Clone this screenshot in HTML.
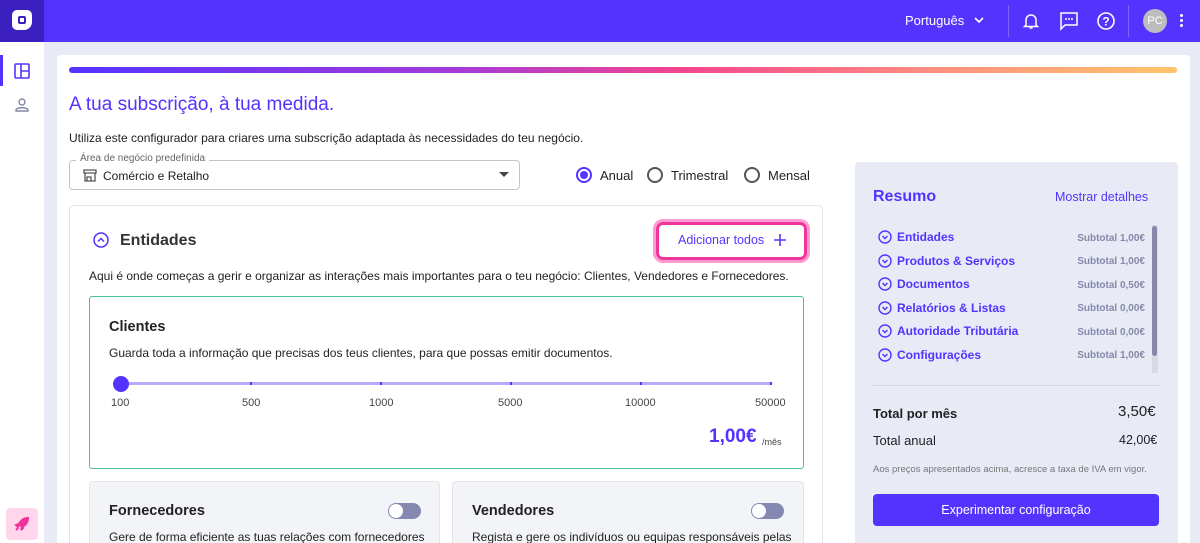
<!DOCTYPE html>
<html style="width:1200px;height:543px;overflow:hidden"><head><meta charset="utf-8"><style>
*{box-sizing:border-box;margin:0;padding:0}
body{width:1200px;height:543px;overflow:hidden;background:#e8eaf6;font-family:"Liberation Sans",sans-serif;color:#222;position:relative;font-size:13px}
.abs{position:absolute}
.top{left:0;top:0;width:1200px;height:42px;background:#5433ff}
.logo{left:0;top:0;width:44px;height:42px;background:#3c1fbf}
.side{left:0;top:42px;width:44px;height:501px;background:#fff}
.card{left:57px;top:55px;width:1133px;height:488px;background:#fff;border-radius:4px 4px 0 0}
.grad{left:69px;top:67px;width:1108px;height:6px;border-radius:3px;background:linear-gradient(90deg,#5433ff,#a53ad8 35%,#f5458f 55%,#ff8f80 78%,#ffc46a)}
.panel{left:69px;top:205px;width:754px;height:360px;border:1px solid #e3e3e8;border-radius:4px}
.sum{left:855px;top:162px;width:323px;height:381px;background:#e8eaf6;border-radius:4px 4px 0 0}
.radio{width:16px;height:16px;border:2px solid #555;border-radius:50%}
.chev{display:inline-block;vertical-align:-3px;margin-right:5px}
.row{left:878px;font-weight:bold;color:#5433ff;font-size:12px}
.sub{right:55px;font-weight:bold;color:#8588a8;font-size:10px}
.tick{top:382px;width:2px;height:3px;background:#5433ff}
.lbl{top:397px;font-size:11px;color:#444}
</style></head><body>
<div class="abs top"></div>
<div class="abs logo"><div class="abs" style="left:12px;top:10px;width:20px;height:20px;border-radius:5px 5px 8px 5px;background:#fff"></div><div class="abs" style="left:18px;top:16px;width:8px;height:8px;border:2px solid #3c1fbf;border-radius:2px;background:#fff"></div></div>
<div class="abs" style="left:905px;top:13px;color:#fff;font-size:13px">Português</div>
<svg class="abs" style="left:973px;top:15px" width="12" height="10"><path d="M2 3l4 4 4-4" stroke="#fff" stroke-width="1.6" fill="none"/></svg>
<div class="abs" style="left:1008px;top:5px;width:1px;height:32px;background:#7a66ff"></div>
<svg class="abs" style="left:1022px;top:11px" width="18" height="20"><path d="M4 14V9a5 5 0 0 1 10 0v5l1.5 1.5h-13z M7.5 17h3" stroke="#fff" stroke-width="1.5" fill="none"/></svg>
<svg class="abs" style="left:1059px;top:11px" width="20" height="20"><path d="M2 2h16v12H6l-4 4z" stroke="#fff" stroke-width="1.5" fill="none"/><circle cx="7" cy="8" r="1" fill="#fff"/><circle cx="10" cy="8" r="1" fill="#fff"/><circle cx="13" cy="8" r="1" fill="#fff"/></svg>
<svg class="abs" style="left:1096px;top:11px" width="20" height="20"><circle cx="10" cy="10" r="8" stroke="#fff" stroke-width="1.6" fill="none"/><text x="10" y="14.5" font-size="12" font-weight="bold" fill="#fff" text-anchor="middle" font-family="Liberation Sans">?</text></svg>
<div class="abs" style="left:1128px;top:5px;width:1px;height:32px;background:#7a66ff"></div>
<div class="abs" style="left:1143px;top:9px;width:24px;height:24px;border-radius:50%;background:#bdbdbd;color:#fff;font-size:11px;text-align:center;line-height:24px">PC</div>
<div class="abs" style="left:1180px;top:14px;width:3px;height:3px;background:#fff;border-radius:50%;box-shadow:0 5px 0 #fff,0 10px 0 #fff"></div>
<div class="abs side"></div>
<div class="abs" style="left:0;top:55px;width:3px;height:31px;background:#5433ff"></div>
<svg class="abs" style="left:14px;top:63px" width="16" height="16"><rect x="1" y="1" width="14" height="14" rx="1" stroke="#5433ff" stroke-width="1.6" fill="none"/><path d="M7 1v14M7 8h8" stroke="#5433ff" stroke-width="1.6"/></svg>
<svg class="abs" style="left:14px;top:97px" width="16" height="16"><circle cx="8" cy="5" r="3" stroke="#8588a8" stroke-width="1.4" fill="none"/><path d="M2 14v-1c0-3 12-3 12 0v1z" stroke="#8588a8" stroke-width="1.4" fill="none"/></svg>
<div class="abs" style="left:6px;top:508px;width:32px;height:32px;border-radius:4px;background:#ffd6ec"></div>
<svg class="abs" style="left:13px;top:515px" width="18" height="18"><path d="M15 3c-4 0-7 2-9 6l3 3c4-2 6-5 6-9zM6 9l-3 1 2 2zM9 12l-1 3 2-2zM5 13l-2 2" stroke="#f0349a" stroke-width="2" fill="#f0349a"/></svg>
<div class="abs card"></div>
<div class="abs grad"></div>
<div class="abs" style="left:69px;top:94px;font-size:19px;color:#5433ff">A tua subscrição, à tua medida.</div>
<div class="abs" style="left:69px;top:131px;font-size:12px">Utiliza este configurador para criares uma subscrição adaptada às necessidades do teu negócio.</div>
<div class="abs" style="left:69px;top:160px;width:451px;height:30px;border:1px solid #c4c4c4;border-radius:4px"></div>
<div class="abs" style="left:76px;top:153px;background:#fff;padding:0 4px;font-size:10px;color:#666">Área de negócio predefinida</div>
<svg class="abs" style="left:83px;top:169px" width="14" height="13"><path d="M1 1h12v3H1zM2 4v8h10V4M4 12V8h4v4" stroke="#555" stroke-width="1.3" fill="none"/></svg>
<div class="abs" style="left:103px;top:169px;font-size:12px">Comércio e Retalho</div>
<svg class="abs" style="left:499px;top:172px" width="10" height="6"><path d="M0 0h10L5 5z" fill="#444"/></svg>
<div class="abs radio" style="left:576px;top:167px;border-color:#5433ff"><div style="margin:2px;width:8px;height:8px;border-radius:50%;background:#5433ff"></div></div>
<div class="abs" style="left:600px;top:168px;font-size:13px">Anual</div>
<div class="abs radio" style="left:647px;top:167px"></div>
<div class="abs" style="left:671px;top:168px;font-size:13px">Trimestral</div>
<div class="abs radio" style="left:744px;top:167px"></div>
<div class="abs" style="left:768px;top:168px;font-size:13px">Mensal</div>
<div class="abs panel"></div>
<svg class="abs" style="left:93px;top:232px" width="16" height="16"><circle cx="8" cy="8" r="7" stroke="#5433ff" stroke-width="1.5" fill="none"/><path d="M5 9.5l3-3 3 3" stroke="#5433ff" stroke-width="1.5" fill="none"/></svg>
<div class="abs" style="left:120px;top:232px;font-size:16px;font-weight:bold;color:#333">Entidades</div>
<div class="abs" style="left:656px;top:222px;width:151px;height:38px;border:3px solid #f0349a;border-radius:7px;box-shadow:0 0 0 3px #ff9bd0"></div>
<div class="abs" style="left:678px;top:233px;font-size:12.5px;color:#5433ff">Adicionar todos</div>
<svg class="abs" style="left:774px;top:234px" width="12" height="12"><path d="M6 0v12M0 6h12" stroke="#5433ff" stroke-width="1.6"/></svg>
<div class="abs" style="left:89px;top:269px;font-size:12px">Aqui é onde começas a gerir e organizar as interações mais importantes para o teu negócio: Clientes, Vendedores e Fornecedores.</div>
<div class="abs" style="left:89px;top:296px;width:715px;height:173px;border:1px solid #4cbf96;border-radius:3px"></div>
<div class="abs" style="left:109px;top:319px;font-size:14.5px;font-weight:bold">Clientes</div>
<div class="abs" style="left:109px;top:346px;font-size:12px">Guarda toda a informação que precisas dos teus clientes, para que possas emitir documentos.</div>
<div class="abs" style="left:118px;top:382px;width:654px;height:3px;background:#b8aaff"></div>
<div class="abs" style="left:113px;top:376px;width:16px;height:16px;border-radius:50%;background:#5433ff"></div>
<div class="abs tick" style="left:250px"></div><div class="abs tick" style="left:380px"></div><div class="abs tick" style="left:510px"></div><div class="abs tick" style="left:640px"></div><div class="abs tick" style="left:770px"></div>
<div class="abs lbl" style="left:111px">100</div><div class="abs lbl" style="left:242px">500</div><div class="abs lbl" style="left:369px">1000</div><div class="abs lbl" style="left:498px">5000</div><div class="abs lbl" style="left:625px">10000</div><div class="abs lbl" style="left:755px">50000</div>
<div class="abs" style="left:709px;top:426px;font-size:19px;font-weight:bold;color:#5433ff">1,00€</div>
<div class="abs" style="left:762px;top:437px;font-size:9px;color:#444">/mês</div>
<div class="abs" style="left:89px;top:481px;width:351px;height:80px;background:#f3f4f8;border:1px solid #e3e3e8;border-radius:4px"></div>
<div class="abs" style="left:452px;top:481px;width:352px;height:80px;background:#f3f4f8;border:1px solid #e3e3e8;border-radius:4px"></div>
<div class="abs" style="left:109px;top:503px;font-size:14.5px;font-weight:bold">Fornecedores</div>
<div class="abs" style="left:472px;top:503px;font-size:14.5px;font-weight:bold">Vendedores</div>
<div class="abs" style="left:388px;top:503px;width:33px;height:16px;border-radius:8px;background:#8588b0"><div style="margin:1px;width:14px;height:14px;border-radius:50%;background:#fff"></div></div>
<div class="abs" style="left:751px;top:503px;width:33px;height:16px;border-radius:8px;background:#8588b0"><div style="margin:1px;width:14px;height:14px;border-radius:50%;background:#fff"></div></div>
<div class="abs" style="left:109px;top:530px;font-size:12px">Gere de forma eficiente as tuas relações com fornecedores</div>
<div class="abs" style="left:472px;top:530px;font-size:12px">Regista e gere os indivíduos ou equipas responsáveis pelas</div>
<div class="abs sum"></div>
<div class="abs" style="left:873px;top:188px;font-size:16px;font-weight:bold;color:#5433ff">Resumo</div>
<div class="abs" style="left:1055px;top:190px;font-size:12.5px;color:#5433ff">Mostrar detalhes</div>
<div class="abs" style="left:1152px;top:225px;width:6px;height:148px;background:#d8dae8"></div>
<div class="abs" style="left:1152px;top:226px;width:5px;height:130px;border-radius:3px;background:#8588a8"></div>
<svg width="0" height="0" style="position:absolute"><defs><symbol id="cv" viewBox="0 0 14 14"><circle cx="7" cy="7" r="6" stroke="#5433ff" stroke-width="1.4" fill="none"/><path d="M4.5 6l2.5 2.5 2.5-2.5" stroke="#5433ff" stroke-width="1.4" fill="none"/></symbol></defs></svg>
<div class="abs row" style="top:230px"><svg class="chev" width="14" height="14"><use href="#cv"/></svg>Entidades</div><div class="abs sub" style="top:233px">Subtotal 1,00€</div>
<div class="abs row" style="top:254px"><svg class="chev" width="14" height="14"><use href="#cv"/></svg>Produtos &amp; Serviços</div><div class="abs sub" style="top:256px">Subtotal 1,00€</div>
<div class="abs row" style="top:277px"><svg class="chev" width="14" height="14"><use href="#cv"/></svg>Documentos</div><div class="abs sub" style="top:280px">Subtotal 0,50€</div>
<div class="abs row" style="top:301px"><svg class="chev" width="14" height="14"><use href="#cv"/></svg>Relatórios &amp; Listas</div><div class="abs sub" style="top:303px">Subtotal 0,00€</div>
<div class="abs row" style="top:324px"><svg class="chev" width="14" height="14"><use href="#cv"/></svg>Autoridade Tributária</div><div class="abs sub" style="top:327px">Subtotal 0,00€</div>
<div class="abs row" style="top:348px"><svg class="chev" width="14" height="14"><use href="#cv"/></svg>Configurações</div><div class="abs sub" style="top:350px">Subtotal 1,00€</div>
<div class="abs" style="left:873px;top:385px;width:286px;height:1px;background:#d4d6e4"></div>
<div class="abs" style="left:873px;top:406px;font-size:13px;font-weight:bold">Total por mês</div>
<div class="abs" style="left:1118px;top:403px;font-size:15px">3,50€</div>
<div class="abs" style="left:873px;top:433px;font-size:13px">Total anual</div>
<div class="abs" style="left:1119px;top:433px;font-size:12.5px">42,00€</div>
<div class="abs" style="left:873px;top:464px;font-size:9.5px;color:#777">Aos preços apresentados acima, acresce a taxa de IVA em vigor.</div>
<div class="abs" style="left:873px;top:494px;width:286px;height:32px;border-radius:4px;background:#5433ff;color:#fff;text-align:center;line-height:32px;font-size:12.5px">Experimentar configuração</div>
</body></html>
